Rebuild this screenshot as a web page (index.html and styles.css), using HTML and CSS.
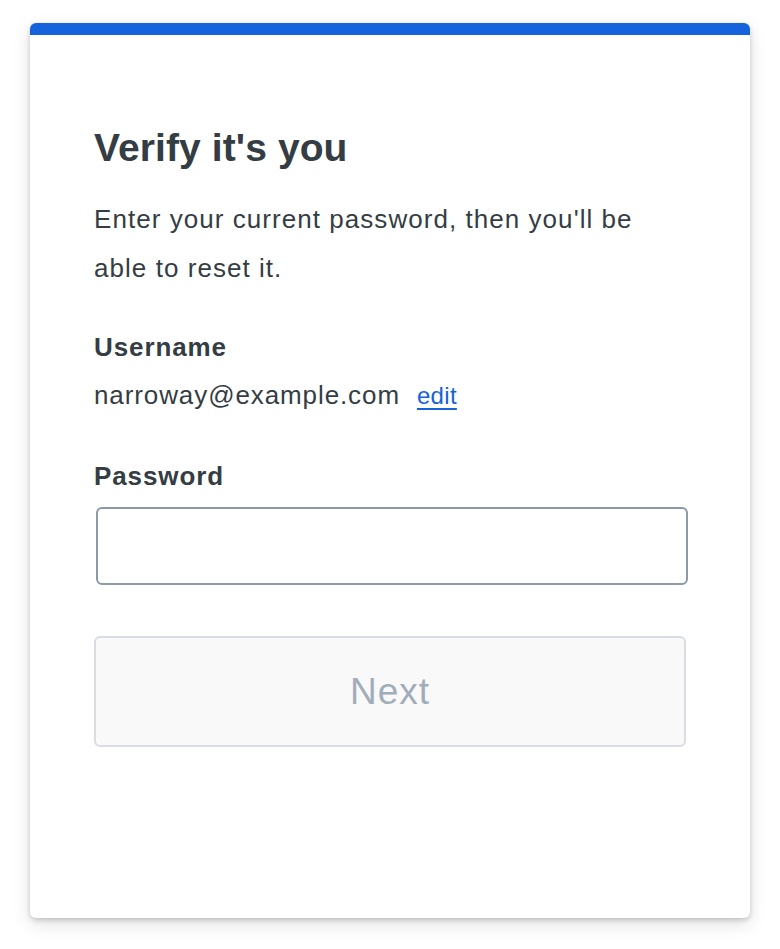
FILE: index.html
```
<!DOCTYPE html>
<html>
<head>
<meta charset="utf-8">
<link rel="stylesheet" href="styles.css">
</head>
<body>
<div class="card">
  <div class="card-bar"></div>
  <div class="card-body">
    <h1 class="title">Verify it's you</h1>
    <p class="intro">Enter your current password, then you'll be able to reset it.</p>
    <div class="label">Username</div>
    <div class="user-row"><span class="email">narroway@example.com</span><a class="edit" href="#">edit</a></div>
    <label class="label pw-label" for="pw">Password</label>
    <input class="input" id="pw" type="password">
    <button class="btn" disabled>Next</button>
  </div>
</div>
</body>
</html>
```
FILE: styles.css
```
html, body { margin: 0; padding: 0; background: #fff; }
body {
  font-family: "Liberation Sans", Arial, sans-serif;
  color: #353d44;
  padding: 23px 30px 31px 30px;
}
.card {
  width: 720px;
  height: 895px;
  background: #fff;
  border-radius: 6px;
  box-shadow: 0 2px 5px rgba(0,0,0,0.18), 0 6px 18px rgba(0,0,0,0.12);
  overflow: hidden;
  box-sizing: border-box;
}
.card-bar { height: 12px; background: #1662dd; }
.card-body { padding: 0 64px; }
.title {
  margin: 0;
  padding-top: 88px;
  font-size: 39px;
  line-height: 50px;
  font-weight: bold;
  letter-spacing: 0.1px;
}
.intro {
  margin: 22px 0 0 0;
  font-size: 26px;
  line-height: 49px;
  letter-spacing: 1.05px;
  width: 580px;
}
.label {
  display: block;
  font-weight: bold;
  font-size: 26px;
  line-height: 32px;
  letter-spacing: 0.9px;
  margin-top: 38px;
}
.user-row {
  display: flex;
  align-items: baseline;
  gap: 17px;
  font-size: 26px;
  line-height: 32px;
  letter-spacing: 0.9px;
  margin-top: 16px;
}
.edit {
  color: #1662dd;
  font-size: 24px;
  letter-spacing: 0.3px;
  text-decoration: underline;
  text-underline-offset: 4px;
  text-decoration-thickness: 2px;
}
.pw-label { margin-top: 48px; }
.input {
  display: block;
  box-sizing: border-box;
  width: 592px;
  height: 78px;
  margin: 15px 0 0 2px;
  border: 2px solid #8c99a6;
  border-radius: 6px;
  background: #fff;
  outline: none;
}
.btn {
  display: block;
  box-sizing: border-box;
  width: 592px;
  height: 111px;
  margin-top: 51px;
  background: #f9f9fa;
  border: 2px solid #d9dde3;
  border-radius: 6px;
  color: #a2adba;
  font-family: "Liberation Sans", Arial, sans-serif;
  font-size: 37px;
  letter-spacing: 1px;
}
```
